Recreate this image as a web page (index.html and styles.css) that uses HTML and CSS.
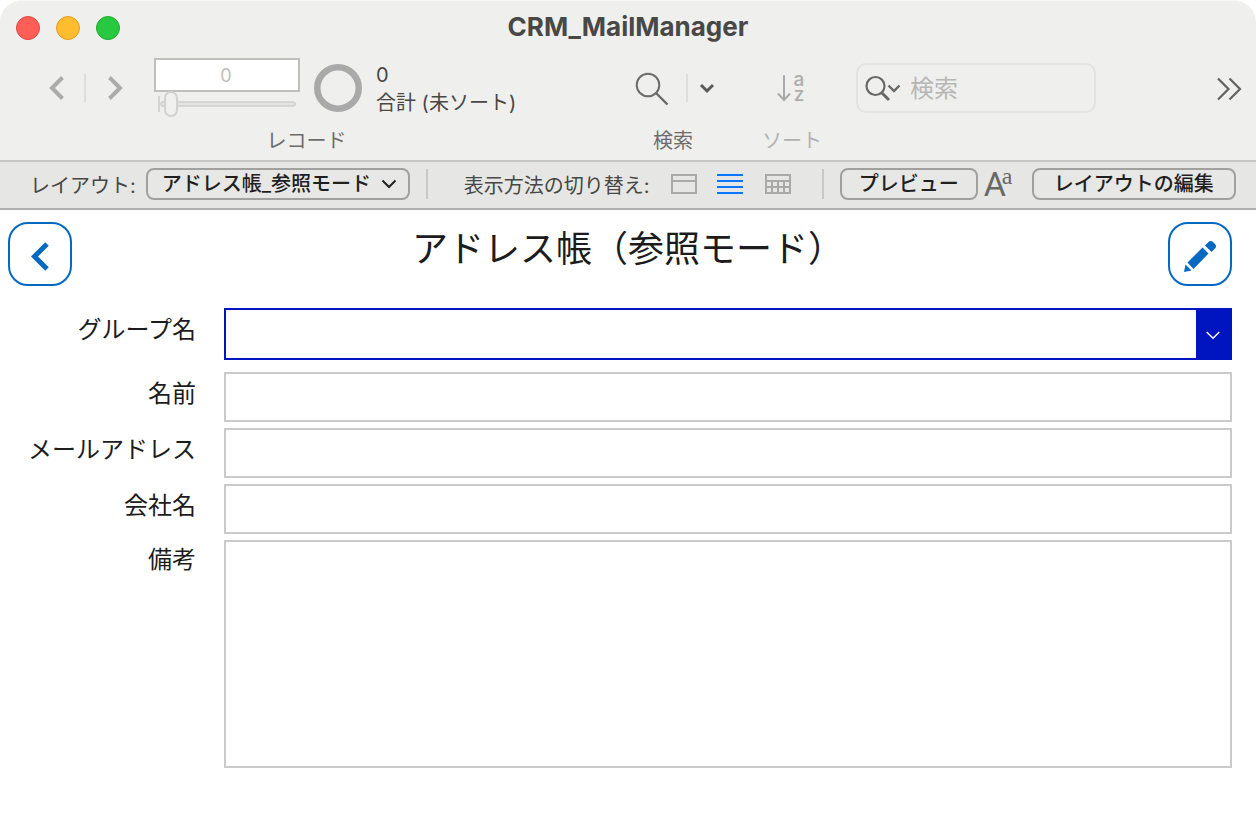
FILE: index.html
```html
<!DOCTYPE html>
<html lang="ja">
<head>
<meta charset="utf-8">
<title>CRM_MailManager</title>
<link rel="stylesheet" href="styles.css">
</head>
<body>
<header class="window-head">
  <div class="titlebar">
    <div class="lights">
      <button class="light red" aria-label="閉じる"></button>
      <button class="light yellow" aria-label="しまう"></button>
      <button class="light green" aria-label="拡大"></button>
    </div>
    <h1 class="window-title">CRM_MailManager</h1>
  </div>
  <div class="toolbar">
    <section class="group records">
      <div class="group-row">
        <button class="icon-btn" aria-label="前のレコード"><svg width="16" height="26" viewBox="0 0 16 26"><path d="M13.500 2.500 3 13l10.500 10.500" fill="none" stroke="#ababab" stroke-width="4"/></svg></button>
        <span class="rule nav-rule"></span>
        <button class="icon-btn" aria-label="次のレコード"><svg width="16" height="26" viewBox="0 0 16 26"><path d="M2.500 2.500 13 13 2.500 23.500" fill="none" stroke="#ababab" stroke-width="4"/></svg></button>
        <div class="counter">
          <input class="number" type="text" value="0" aria-label="レコード番号">
          <div class="slide"><input class="slider" type="range" min="0" max="100" value="2" aria-label="レコード位置"></div>
        </div>
        <svg class="ring" width="48" height="48" viewBox="0 0 48 48"><circle cx="24" cy="24" r="20.750" fill="none" stroke="#a9a9a9" stroke-width="6.500"/></svg>
        <div class="total"><span>0</span><span>合計 (未ソート)</span></div>
      </div>
      <div class="caption">レコード</div>
    </section>
    <section class="group find">
      <div class="group-row">
        <button class="icon-btn" aria-label="検索"><svg width="34" height="34" viewBox="0 0 34 34" fill="none" stroke="#6b6b69" stroke-width="2"><circle cx="13" cy="14" r="11.300"/><path d="m21 22 11.500 11.500" stroke-width="2.400"/></svg></button>
        <span class="rule find-rule"></span>
        <button class="icon-btn" aria-label="検索メニュー"><svg width="16" height="12" viewBox="0 0 16 12"><path d="m2 3 6 6 6-6" fill="none" stroke="#5a5a59" stroke-width="3"/></svg></button>
      </div>
      <div class="caption">検索</div>
    </section>
    <section class="group sort">
      <div class="group-row">
        <button class="icon-btn sort-btn" aria-label="ソート"><svg width="14" height="28" viewBox="0 0 14 28" fill="none" stroke="#a9a9a8" stroke-width="2"><path d="M7 1v25M1 19.500l6 6.500 6-6.500"/></svg><span class="az"><span>a</span><span>z</span></span></button>
      </div>
      <div class="caption muted">ソート</div>
    </section>
    <label class="search">
      <svg width="36" height="28" viewBox="0 0 36 28" fill="none" stroke="#686867"><circle cx="10.500" cy="12" r="9" stroke-width="2.200"/><path d="m17 19 7 7" stroke-width="3"/><path d="m23.500 11.500 5.500 5.500 5.500-5.500" stroke-width="2.400"/></svg>
      <input type="search" placeholder="検索" aria-label="クイック検索">
    </label>
    <button class="icon-btn more" aria-label="その他"><svg width="26" height="24" viewBox="0 0 26 24"><path d="M2 1.500 12.500 12 2 22.500M13.500 1.500 24 12 13.500 22.500" fill="none" stroke="#626261" stroke-width="2.200"/></svg></button>
  </div>
  <div class="layoutbar">
    <label for="layout">レイアウト:</label>
    <div class="picker">
      <select id="layout"><option>アドレス帳_参照モード</option></select>
      <svg class="picker-arrow" width="16" height="10" viewBox="0 0 16 10"><path d="m1.500 1.500 6.500 6.500 6.500-6.500" fill="none" stroke="#222" stroke-width="2"/></svg>
    </div>
    <span class="rule bar-rule"></span>
    <span class="view-label">表示方法の切り替え:</span>
    <div class="views">
      <button class="icon-btn" aria-label="フォーム形式"><svg width="26" height="20" viewBox="0 0 26 20" fill="none" stroke="#a9a9a8" stroke-width="2"><path d="M1 1h24v18H1zM1 7h24"/></svg></button>
      <button class="icon-btn" aria-label="リスト形式"><svg width="26" height="20" viewBox="0 0 26 20"><path d="M0 1h26M0 7h26M0 13h26M0 19h26" stroke="#0a76ff" stroke-width="2"/></svg></button>
      <button class="icon-btn table-view" aria-label="表形式"><svg width="26" height="20" viewBox="0 0 26 20" fill="none" stroke="#a9a9a8" stroke-width="2"><path d="M1 1h24v18H1zM1 7h24M1 13h24M7 7v12M13 7v12M19 7v12"/></svg></button>
    </div>
    <span class="rule bar-rule"></span>
    <button class="bar-btn preview">プレビュー</button>
    <button class="icon-btn format" aria-label="書式設定バー"><span class="big-a">A</span><span class="small-a">a</span></button>
    <button class="bar-btn edit">レイアウトの編集</button>
  </div>
</header>
<main class="page">
  <div class="page-head">
    <button class="square" aria-label="戻る"><svg width="18" height="30" viewBox="0 0 18 30"><path d="M16 3 3.500 15.500 16 28" fill="none" stroke="#0568c1" stroke-width="5"/></svg></button>
    <h2 class="page-title">アドレス帳（参照モード）</h2>
    <button class="square" aria-label="編集"><svg width="34" height="34" viewBox="0 0 34 34" fill="#0568c1"><path d="M1 33 2.500 25.500l6 6zM4.500 23.500 19.500 8.500l6 6-15 15.500zM22 6.500l3.500-3.500q2.300-2 4.500 0l2 2q2 2.200 0 4.500L28.500 13z"/></svg></button>
  </div>
  <form class="form">
    <label for="group">グループ名</label>
    <div class="combo"><input id="group" type="text"><button type="button" aria-label="グループを選択"><svg width="14" height="9" viewBox="0 0 14 9"><path d="m.7 1 6.300 6.300L13.300 1" fill="none" stroke="#fff" stroke-width="1.500"/></svg></button></div>
    <label for="name">名前</label>
    <input class="field" id="name" type="text">
    <label for="mail">メールアドレス</label>
    <input class="field" id="mail" type="text">
    <label for="company">会社名</label>
    <input class="field" id="company" type="text">
    <label for="notes" class="notes-label">備考</label>
    <textarea class="field notes" id="notes"></textarea>
  </form>
</main>
</body>
</html>
```
FILE: styles.css
```css
* { box-sizing: border-box; }
body {
  margin: 0;
  background: #fff;
  color: #1c1c1c;
  font-family: Inter, "Noto Sans CJK JP", sans-serif;
  font-size: 20px;
}
button, input, select, textarea { font: inherit; color: inherit; margin: 0; }
svg { display: block; flex: none; }
.window-head {
  background: #efefed;
  border-radius: 22px 22px 0 0;
  border-top: 1px solid #f7f7f6;
}
.titlebar {
  display: grid;
  grid-template-columns: 1fr auto 1fr;
  align-items: center;
  height: 53px;
  padding: 0 16px;
}
.lights { display: flex; gap: 16px; }
.light { width: 24px; height: 24px; padding: 0; border-radius: 50%; border: 1px solid; }
.red { background: #ff5f57; border-color: #e2463f; }
.yellow { background: #febc2e; border-color: #e0a028; }
.green { background: #28c840; border-color: #1eac2c; }
.window-title { margin: 0; font-size: 26px; line-height: 32px; padding-bottom: 2px; font-weight: 700; color: #484846; }
.icon-btn { display: flex; align-items: center; padding: 0; border: 0; background: none; flex: none; }
.rule { background: #dededd; width: 2px; flex: none; }
.toolbar {
  display: flex;
  align-items: flex-start;
  height: 106px;
  padding: 4px 14px 0 49px;
}
.group { display: flex; flex-direction: column; }
.group-row { display: flex; align-items: center; height: 60px; }
.caption { line-height: 28px; margin-top: 9px; text-align: center; white-space: nowrap; color: #6c6c6a; }
.caption.muted { color: #b2b2b1; }
.records .caption { padding-left: 44px; }
.nav-rule { height: 28px; margin: 0 21px 0 19px; }
.counter { width: 146px; height: 60px; margin-left: 31px; }
.number {
  display: block;
  width: 100%;
  height: 34px;
  padding: 0 2px 0 0;
  border: 2px solid #bfbfbe;
  background: #fff;
  color: #bdbdbc;
  font-size: 18px;
  text-align: center;
}
.slide {
  display: flex;
  align-items: center;
  height: 24px;
  margin: 0 4px;
  border-style: solid;
  border-width: 0 0 0 2px;
  border-image: linear-gradient(transparent 5px, #d5d5d4 5px, #d5d5d4 19px, transparent 19px) 1;
}
.slider { appearance: none; width: 100%; height: 26px; background: none; }
.slider::-webkit-slider-runnable-track { height: 6px; border: 2px solid #d5d5d4; border-radius: 3px; background: #e2e2e1; }
.slider::-webkit-slider-thumb { appearance: none; width: 14px; height: 26px; margin-top: -12px; border: 2px solid #d2d2d1; border-radius: 7px; background: #f0f0ee; }
.ring { margin-left: 14px; }
.total { display: flex; flex-direction: column; margin-left: 14px; padding-top: 2px; line-height: 28px; color: #474746; width: 144px; white-space: nowrap; }
.find { margin-left: 115px; }
.find .caption { width: 76px; }
.find-rule { height: 28px; margin: 0 11px 0 17px; }
.sort { margin-left: 47px; width: 58px; }
.sort .group-row { justify-content: center; }
.sort-btn { gap: 2px; color: #adadac; }
.az { display: flex; flex-direction: column; width: 12px; font-size: 19px; line-height: 15px; font-weight: 500; padding-bottom: 3px; }
.search {
  display: flex;
  align-items: center;
  gap: 9px;
  width: 240px;
  height: 50px;
  margin: 5px 0 0 36px;
  padding: 0 8px 0 7px;
  border: 2px solid #e2e2e1;
  border-radius: 10px;
}
.search input { flex: 1; min-width: 0; border: 0; padding: 0; background: none; font-size: 24px; }
.search input::placeholder { color: #b6b6b5; }
.more { height: 60px; padding-top: 2px; margin-left: auto; }
.layoutbar {
  display: flex;
  align-items: center;
  height: 50px;
  padding: 0 20px 2px 30px;
  background: #e6e6e4;
  border-top: 2px solid #c6c6c5;
  border-bottom: 2px solid #afafae;
  color: #474746;
  white-space: nowrap;
}
.picker { display: grid; align-items: center; width: 264px; height: 32px; margin-left: 10px; }
.picker select, .picker-arrow { grid-area: 1 / 1; }
.picker select, .bar-btn {
  height: 32px;
  border: 2px solid #a0a09f;
  border-radius: 8px;
  background: #e7e7e5;
  color: #1f1f1f;
  line-height: 28px;
  font-weight: 500;
}
.picker select { appearance: none; width: 100%; padding: 0 28px 0 14px; }
.picker-arrow { justify-self: end; margin-right: 13px; pointer-events: none; }
.bar-rule { height: 30px; margin: 0 16px; background: #c8c8c7; }
.view-label { margin-left: 20px; width: 191px; }
.views { display: flex; gap: 20px; margin-left: 16px; margin-right: 15px; }
.table-view { margin-left: 2px; }
.bar-btn { padding: 0; flex: none; }
.preview { width: 138px; }
.edit { width: 204px; }
.format { align-items: flex-start; margin: 0 20px 0 6px; width: 28px; color: #686867; }
.big-a { width: 18px; font-family: Roboto, sans-serif; font-size: 34px; line-height: 34px; }
.small-a { font-family: "Liberation Serif", serif; font-size: 24px; line-height: 18px; }
.page { padding: 12px 24px 0 8px; }
.page-head { display: flex; align-items: flex-start; justify-content: space-between; }
.square {
  display: flex;
  align-items: center;
  justify-content: center;
  width: 64px;
  height: 64px;
  padding: 3px 0 0;
  border: 2px solid #0568c1;
  border-radius: 20px;
  background: #fff;
}
.page-title { margin: 0; padding-left: 16px; font-size: 36px; line-height: 54px; font-weight: 400; }
.form {
  display: grid;
  grid-template-columns: 188px 1fr;
  column-gap: 28px;
  row-gap: 6px;
  margin-top: 22px;
  font-size: 24px;
}
.form label { text-align: right; line-height: 44px; }
.form .notes-label { line-height: 40px; }
.field { width: 100%; height: 50px; padding: 4px 8px; border: 2px solid #cacaca; border-radius: 0; background: #fff; outline: 0; }
.notes { height: 228px; resize: none; }
.combo { display: flex; height: 52px; margin-bottom: 6px; border: 2px solid #0014bf; background: #fff; }
.combo input { flex: 1; min-width: 0; border: 0; padding: 4px 8px; background: none; outline: 0; }
.combo button { display: flex; align-items: center; justify-content: center; width: 34px; padding: 2px 0 0; border: 0; background: #0014bf; }
```
